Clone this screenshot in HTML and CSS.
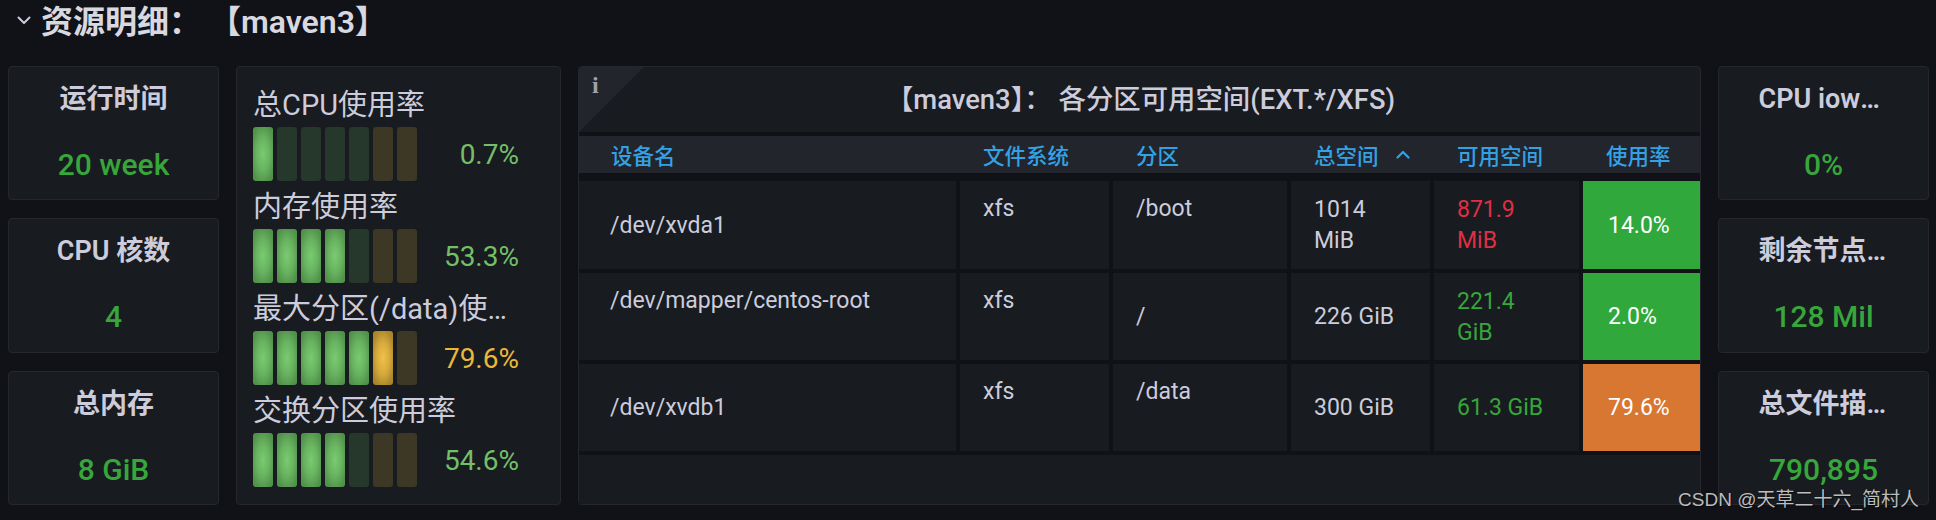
FILE: index.html
```html
<!DOCTYPE html>
<html lang="zh">
<head>
<meta charset="utf-8">
<title>资源明细</title>
<link rel="stylesheet" href="styles.css">
</head>
<body>
<div class="dash">
  <div class="head">
    <svg class="chev" viewBox="0 0 14 9"><path d="M1.5 1.5 L7 7 L12.5 1.5" fill="none" stroke="#ccccdc" stroke-width="2" stroke-linecap="round" stroke-linejoin="round"/></svg>
    <span>资源明细： 【maven3】</span>
  </div>
  <div class="grid">
    <div class="col">
      <div class="panel stat"><div class="st-title">运行时间</div><div class="st-val">20 week</div></div>
      <div class="panel stat"><div class="st-title">CPU 核数</div><div class="st-val">4</div></div>
      <div class="panel stat"><div class="st-title">总内存</div><div class="st-val">8 GiB</div></div>
    </div>

    <div class="panel gauges">
      <div class="g-row">
        <div class="g-label">总CPU使用率</div>
        <div class="g-bars">
          <div class="leds"><i class="led g on"></i><i class="led g"></i><i class="led g"></i><i class="led g"></i><i class="led g"></i><i class="led y"></i><i class="led y"></i></div>
          <div class="g-val c-green">0.7%</div>
        </div>
      </div>
      <div class="g-row">
        <div class="g-label">内存使用率</div>
        <div class="g-bars">
          <div class="leds"><i class="led g on"></i><i class="led g on"></i><i class="led g on"></i><i class="led g on"></i><i class="led g"></i><i class="led y"></i><i class="led y"></i></div>
          <div class="g-val c-green">53.3%</div>
        </div>
      </div>
      <div class="g-row">
        <div class="g-label">最大分区(/data)使用率</div>
        <div class="g-bars">
          <div class="leds"><i class="led g on"></i><i class="led g on"></i><i class="led g on"></i><i class="led g on"></i><i class="led g on"></i><i class="led y on"></i><i class="led y"></i></div>
          <div class="g-val c-yellow">79.6%</div>
        </div>
      </div>
      <div class="g-row">
        <div class="g-label">交换分区使用率</div>
        <div class="g-bars">
          <div class="leds"><i class="led g on"></i><i class="led g on"></i><i class="led g on"></i><i class="led g on"></i><i class="led g"></i><i class="led y"></i><i class="led y"></i></div>
          <div class="g-val c-green">54.6%</div>
        </div>
      </div>
    </div>

    <div class="panel tpanel">
      <div class="corner"></div>
      <div class="info">i</div>
      <div class="tp-title">【maven3】： 各分区可用空间(EXT.*/XFS)</div>
      <div class="tbl">
        <div class="thead">
          <div class="th first">设备名</div>
          <div class="th">文件系统</div>
          <div class="th">分区</div>
          <div class="th">总空间<svg class="caret" viewBox="0 0 14 9"><path d="M1.5 7.5 L7 2 L12.5 7.5" fill="none" stroke="#33a2e5" stroke-width="2.2" stroke-linecap="round" stroke-linejoin="round"/></svg></div>
          <div class="th">可用空间</div>
          <div class="th">使用率</div>
        </div>
        <div class="tr r1">
          <div class="td first">/dev/xvda1</div>
          <div class="td top">xfs</div>
          <div class="td top">/boot</div>
          <div class="td"><span class="wrap">1014 MiB</span></div>
          <div class="td c-red"><span class="wrap">871.9 MiB</span></div>
          <div class="td pct bg-green">14.0%</div>
        </div>
        <div class="tr">
          <div class="td first top">/dev/mapper/centos-root</div>
          <div class="td top">xfs</div>
          <div class="td">/</div>
          <div class="td">226 GiB</div>
          <div class="td c-green"><span class="wrap">221.4 GiB</span></div>
          <div class="td pct bg-green">2.0%</div>
        </div>
        <div class="tr">
          <div class="td first">/dev/xvdb1</div>
          <div class="td top">xfs</div>
          <div class="td top">/data</div>
          <div class="td">300 GiB</div>
          <div class="td c-green">61.3 GiB</div>
          <div class="td pct bg-orange">79.6%</div>
        </div>
        <div class="filler"></div>
      </div>
    </div>

    <div class="col">
      <div class="panel stat"><div class="st-title narrow">CPU iowait</div><div class="st-val">0%</div></div>
      <div class="panel stat"><div class="st-title narrow">剩余节点数</div><div class="st-val">128 Mil</div></div>
      <div class="panel stat"><div class="st-title narrow">总文件描述符</div><div class="st-val">790,895</div></div>
    </div>
  </div>
</div>
<div class="wm">CSDN @天草二十六_简村人</div>
</body>
</html>
```

FILE: styles.css
```css
html, body {
  margin: 0;
  padding: 0;
}
body {
  background: #111217;
  font-family: Roboto, "Noto Sans CJK SC", sans-serif;
  color: #ccccdc;
  width: 1936px;
  height: 520px;
  overflow: hidden;
  position: relative;
}
.dash {
  padding: 0 8px;
}
.head {
  height: 38px;
  display: flex;
  align-items: center;
  gap: 10px;
  padding-left: 9px;
  margin-bottom: 28px;
  font-size: 32px;
  font-weight: 600;
  color: #d8d9e0;
  white-space: pre;
}
.chev {
  width: 14px;
  height: 9px;
  flex: none;
  margin-top: 2px;
}
.grid {
  display: grid;
  grid-template-columns: 211px 325px 1123px 211px;
  column-gap: 17px;
  height: 439px;
}
.col {
  display: flex;
  flex-direction: column;
  gap: 18px;
}
.panel {
  background: #181b1f;
  border: 1px solid #25272d;
  border-radius: 4px;
  box-sizing: border-box;
}

/* stat panels */
.stat {
  flex: 1;
  display: flex;
  flex-direction: column;
  align-items: center;
  padding-top: 16px;
}
.st-title {
  font-size: 27px;
  font-weight: 600;
  line-height: 32px;
  max-width: 150px;
  white-space: nowrap;
  overflow: hidden;
  text-overflow: ellipsis;
  color: #ccccdc;
}
.st-title.narrow {
  width: 130px;
}
.st-val {
  margin-top: 31px;
  font-size: 30px;
  font-weight: 500;
  line-height: 37px;
  color: #37a63b;
}

/* bar gauges */
.gauges {
  padding: 22px 41px 0 16px;
}
.g-row {
  margin-bottom: 10px;
}
.g-label {
  font-size: 29px;
  line-height: 32px;
  white-space: nowrap;
  overflow: hidden;
  text-overflow: ellipsis;
  margin-bottom: 6px;
}
.g-bars {
  display: flex;
  align-items: center;
  height: 54px;
}
.leds {
  display: flex;
  gap: 4px;
  height: 54px;
}
.led {
  display: block;
  width: 20px;
  height: 54px;
  border-radius: 3px;
}
.led.g { background: #26382c; }
.led.y { background: #3d3826; }
.led.g.on { background: radial-gradient(ellipse 60% 55% at 50% 50%, #7acb70 0%, #68b360 55%, #52934c 100%); }
.led.y.on { background: radial-gradient(ellipse 60% 55% at 50% 50%, #efc24c 0%, #d6a93b 55%, #aa852d 100%); }
.g-val {
  flex: 1;
  text-align: right;
  font-size: 28px;
}
.c-green { color: #73bf69; }
.c-yellow { color: #eab839; }

/* table panel */
.tpanel {
  position: relative;
  overflow: hidden;
  display: flex;
  flex-direction: column;
}
.corner {
  position: absolute;
  left: 0;
  top: 0;
  width: 65px;
  height: 65px;
  background: #22252b;
  clip-path: polygon(0 0, 100% 0, 0 100%);
}
.info {
  position: absolute;
  left: 13px;
  top: 5px;
  font-family: "Liberation Serif", serif;
  font-weight: bold;
  font-size: 24px;
  color: #9fa1a6;
}
.tp-title {
  height: 65px;
  box-sizing: border-box;
  padding: 17px 0 0 2px;
  text-align: center;
  font-size: 27.4px;
  font-weight: 500;
  line-height: 32px;
  flex: none;
  white-space: pre;
}
.tbl {
  flex: 1;
  display: flex;
  flex-direction: column;
  background: #111217;
  padding-top: 4px;
}
.thead, .tr {
  display: grid;
  grid-template-columns: 377px 149px 174px 139px 145px 1fr;
  column-gap: 4px;
}
.thead {
  background: #22252b;
  height: 37px;
  margin-bottom: 8px;
  flex: none;
}
.th {
  color: #33a2e5;
  font-size: 21.5px;
  font-weight: 500;
  display: flex;
  align-items: center;
  padding-left: 23px;
}
.th.first { padding-left: 32px; }
.caret {
  width: 14px;
  height: 9px;
  margin-left: 17px;
}
.tr {
  height: 87px;
  margin-bottom: 4px;
  flex: none;
}
.tr.r1 { height: 88px; }
.td {
  background: #181b1f;
  display: flex;
  align-items: center;
  padding-left: 23px;
  font-size: 23px;
  line-height: 31px;
  color: #ccccdc;
}
.td.first { padding-left: 31px; }
.td.top {
  align-items: flex-start;
  padding-top: 12px;
}
.wrap { max-width: 80px; }
.td.c-green { color: #37a63b; }
.td.c-red { color: #e02f44; }
.td.pct {
  color: #ffffff;
  padding-left: 25px;
}
.bg-green { background: #31a83b !important; }
.bg-orange { background: #d87732 !important; }
.filler {
  flex: 1;
  background: #181b1f;
}

/* watermark */
.wm {
  position: absolute;
  right: 17px;
  bottom: 9px;
  font-family: "Liberation Sans", "Noto Sans CJK SC", sans-serif;
  font-size: 19px;
  line-height: 22px;
  color: rgba(220, 220, 220, 0.85);
  text-shadow: 1px 1px 1px rgba(0, 0, 0, 0.6);
}
```
